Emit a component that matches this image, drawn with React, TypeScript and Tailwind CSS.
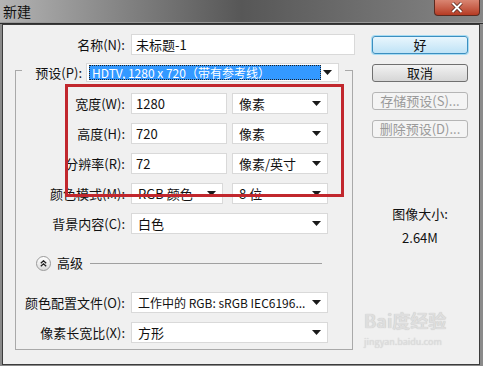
import React from "react";

const FONT = { fontFamily: '"Noto Sans CJK SC", "Noto Sans", sans-serif' };

function Arrow() {
  return (
    <svg width="9" height="5" viewBox="0 0 9 5" className="shrink-0">
      <path d="M0 0 L9 0 L4.5 5 Z" fill="#1a1a1a" />
    </svg>
  );
}

function TextBox({ value, w }: { value: string; w: string }) {
  return (
    <div className={`${w} h-[21px] bg-white border border-[#d9d9d9] flex items-center pl-[4px] text-[13px] text-[#111]`}>
      {value}
    </div>
  );
}

function Select({ value, w }: { value: string; w: string }) {
  return (
    <div className={`${w} h-[21px] bg-white border border-[#d9d9d9] flex items-center pl-[6px] pr-[6px] text-[13px] text-[#111]`}>
      <span className="flex-1 whitespace-nowrap overflow-hidden">{value}</span>
      <Arrow />
    </div>
  );
}

function Label({ text, w }: { text: string; w: string }) {
  return <div className={`${w} text-right text-[13px] text-[#111] whitespace-nowrap`}>{text}</div>;
}

function Btn({ text, primary, disabled }: { text: string; primary?: boolean; disabled?: boolean }) {
  return (
    <div
      className={`w-[96px] h-[18px] rounded-[3px] flex items-center justify-center text-[13px] border ${
        primary
          ? "border-[#3c8fc0] bg-linear-to-b from-[#e9f6fd] to-[#bfe3f6] text-[#111] shadow-[0_0_0_1px_#a8dcf3]"
          : disabled
          ? "border-[#b5b5b5] bg-[#f4f4f4] text-[#9a9a9a]"
          : "border-[#707070] bg-linear-to-b from-[#f2f2f2] to-[#d6d6d6] text-[#111]"
      }`}
    >
      {text}
    </div>
  );
}

export default function App() {
  return (
    <div className="relative w-[483px] h-[366px] bg-[#8a8a8a] flex flex-col overflow-hidden" style={FONT}>
      {/* Title bar */}
      <div className="h-[24px] shrink-0 relative bg-linear-to-r from-[#b4b4b4] via-[#575757] to-[#868686] border-b border-[#2e2e2e]">
        <div className="absolute left-0 right-0 bottom-0 h-px bg-[#9a9a9a]" />
        <span className="absolute left-[3px] top-[1px] text-[14px] text-[#111]">新建</span>
        <div className="absolute left-[434px] top-0 w-[46px] h-[16px] rounded-b-[4px] border border-t-0 border-[#5a2a20] bg-linear-to-b from-[#d98572] to-[#b53a22] flex items-center justify-center">
          <svg width="12" height="11" viewBox="0 0 12 11">
            <path d="M1.5 1 L10.5 10 M10.5 1 L1.5 10" stroke="#4a1a10" strokeWidth="3.4" />
            <path d="M1.5 1 L10.5 10 M10.5 1 L1.5 10" stroke="#fff" strokeWidth="2" />
          </svg>
        </div>
      </div>

      {/* Body */}
      <div className="ml-[2px] mr-[3px] h-[341px] border border-[#3c3c3c] bg-[#f0f0f0] flex">
        {/* Left column */}
        <div className="w-[357px] flex flex-col pt-[9px]">
          <div className="flex items-center gap-[6px] h-[21px]">
            <Label text="名称(N):" w="w-[122px]" />
            <TextBox value="未标题-1" w="w-[224px]" />
          </div>

          {/* Group box */}
          <div className="ml-[12px] mt-[15px] w-[338px] h-[280px] border border-[#a9a9a9] flex flex-col">
            <div className="-mt-[8px] ml-[6px] w-[323px] bg-[#f0f0f0] flex items-center gap-[4px] h-[19px]">
              <Label text="预设(P):" w="w-[60px]" />
              <div className="w-[253px] h-[19px] bg-white border border-[#d9d9d9] flex items-center pl-[2px] pr-[6px]">
                <div className="w-[232px] h-[15px] bg-[#3399ff] border border-dotted border-[#222] text-white text-[12px] leading-[13px] pl-[2px] whitespace-nowrap overflow-hidden">
                  HDTV, 1280 x 720（带有参考线）
                </div>
                <div className="flex-1 flex justify-end">
                  <Arrow />
                </div>
              </div>
            </div>

            <div className="mt-[11px] flex flex-col gap-[9px]">
              {[
                ["宽度(W):", "1280", "像素"],
                ["高度(H):", "720", "像素"],
                ["分辨率(R):", "72", "像素/英寸"],
              ].map(([l, v, u]) => (
                <div key={l} className="flex items-center h-[21px]">
                  <Label text={l} w="w-[109px]" />
                  <div className="ml-[6px]">
                    <TextBox value={v} w="w-[96px]" />
                  </div>
                  <div className="ml-[5px]">
                    <Select value={u} w="w-[96px]" />
                  </div>
                </div>
              ))}
              <div className="flex items-center h-[21px]">
                <Label text="颜色模式(M):" w="w-[109px]" />
                <div className="ml-[6px]">
                  <Select value="RGB 颜色" w="w-[92px]" />
                </div>
                <div className="ml-[9px]">
                  <Select value="8 位" w="w-[96px]" />
                </div>
              </div>
              <div className="flex items-center h-[21px]">
                <Label text="背景内容(C):" w="w-[109px]" />
                <div className="ml-[6px]">
                  <Select value="白色" w="w-[197px]" />
                </div>
              </div>
            </div>

            {/* Advanced */}
            <div className="mt-[21px] ml-[20px] flex items-center h-[16px]">
              <div className="w-[15px] h-[15px] rounded-full border border-[#9a9a9a] bg-linear-to-b from-white to-[#dcdcdc] flex items-center justify-center">
                <svg width="7" height="7" viewBox="0 0 7 7">
                  <path d="M0.8 3.2 L3.5 0.8 L6.2 3.2 M0.8 6.2 L3.5 3.8 L6.2 6.2" stroke="#222" strokeWidth="1.3" fill="none" />
                </svg>
              </div>
              <span className="ml-[6px] text-[13px] text-[#111]">高级</span>
              <div className="ml-[7px] w-[232px] h-px bg-[#a0a0a0]" />
            </div>

            <div className="mt-[21px] flex flex-col gap-[9px]">
              <div className="flex items-center h-[21px]">
                <Label text="颜色配置文件(O):" w="w-[109px]" />
                <div className="ml-[6px] w-[197px] h-[21px] bg-white border border-[#d9d9d9] flex items-center pl-[6px] pr-[6px] text-[12px] text-[#111]">
                  <span className="flex-1 whitespace-nowrap">工作中的 RGB: sRGB IEC6196...</span>
                  <Arrow />
                </div>
              </div>
              <div className="flex items-center h-[21px]">
                <Label text="像素长宽比(X):" w="w-[109px]" />
                <div className="ml-[6px]">
                  <Select value="方形" w="w-[197px]" />
                </div>
              </div>
            </div>
          </div>
        </div>

        {/* Right column */}
        <div className="ml-[12px] pt-[11px] flex flex-col gap-[10px]">
          <Btn text="好" primary />
          <Btn text="取消" />
          <Btn text="存储预设(S)..." disabled />
          <Btn text="删除预设(D)..." disabled />
          <div className="mt-[56px] w-[96px] flex flex-col items-center text-[13px] text-[#111]">
            <span>图像大小:</span>
            <span className="mt-[4px]">2.64M</span>
          </div>
          <div className="mt-[54px] -ml-[8px] flex flex-col items-start text-[#dedede]">
            <span className="text-[18px] font-bold leading-[18px] [text-shadow:0_0_1px_#bbb]">Bai度经验</span>
            <span className="mt-[8px] text-[9px] leading-[10px] [text-shadow:0_0_1px_#c8c8c8]">jingyan.baidu.com</span>
          </div>
        </div>
      </div>

      {/* Red annotation */}
      <div className="absolute left-[65px] top-[84px] w-[279px] h-[113px] border-[3px] border-[#c1272d]" />
    </div>
  );
}
